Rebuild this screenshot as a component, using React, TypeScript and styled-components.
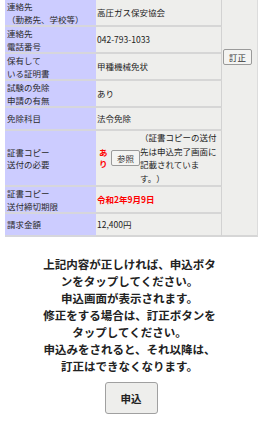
import styled, { createGlobalStyle } from 'styled-components'

const GlobalStyle = createGlobalStyle`
  html, body {
    margin: 0;
    padding: 0;
    background: #ffffff;
  }

  body {
    font-family: "Noto Sans CJK JP", "Noto Sans", sans-serif;
    color: #222222;
  }
`

const Page = styled.div`
  width: 259px;
  display: flex;
  flex-direction: column;
  align-items: center;
`

const Table = styled.table`
  width: 253px;
  margin: 0 1px 0 5px;
  table-layout: fixed;
  border-spacing: 0;
  border-collapse: separate;
  font-size: 8.5px;
  line-height: 12.5px;
  align-self: flex-start;
`

const Label = styled.th<{ $h?: number }>`
  width: 89px;
  height: ${({ $h }) => $h ?? 21}px;
  padding: 0 0 0 2px;
  text-align: left;
  font-weight: normal;
  color: #2a2a2a;
  background: #ccccff;
  border-bottom: 2px solid #d6d6dc;
  vertical-align: middle;
`

const Value = styled.td<{ $red?: boolean }>`
  width: 124px;
  padding: 0 0 0 1px;
  color: ${({ $red }) => ($red ? '#ff0000' : '#222222')};
  font-weight: ${({ $red }) => ($red ? 'bold' : 'normal')};
  background: #eeeeec;
  border-bottom: 2px solid #d6d6d6;
  border-right: 1px solid #d2d2d2;
  vertical-align: middle;
`

const Side = styled.td`
  width: 35px;
  padding: 49px 0 0 0;
  background: #eeeeec;
  border-right: 1px solid #dcdcdc;
  border-bottom: 2px solid #d6d6d6;
  vertical-align: top;
`

const SmallButton = styled.button<{ $w: number }>`
  flex: none;
  width: ${({ $w }) => $w}px;
  height: 16px;
  margin: 0 0 0 1px;
  padding: 0;
  font-family: inherit;
  font-size: 8.5px;
  line-height: 14px;
  color: #333333;
  background: #f4f4f2;
  border: 1px solid #9a9a9a;
  border-radius: 2px;
`

const CopyRow = styled.div`
  display: flex;
  align-items: center;
`

const Mark = styled.span`
  flex: none;
  width: 9px;
  margin: 0 2px 0 2px;
  color: #ff0000;
  font-weight: bold;
  line-height: 11px;
`

const Note = styled.span`
  flex: none;
  width: 80px;
  line-height: 13.5px;
  text-spacing-trim: space-all;
`

const Message = styled.p`
  width: 179px;
  margin: 19px 0 0;
  font-size: 11.5px;
  line-height: 17px;
  font-weight: bold;
  text-align: center;
  color: #222222;
`

const Submit = styled.button`
  width: 53px;
  height: 32px;
  margin: 7px 0 0 3px;
  padding: 0;
  font-family: inherit;
  font-size: 10.5px;
  font-weight: bold;
  color: #222222;
  background: #eeeeec;
  border: 1px solid #a0a0a0;
  border-radius: 3px;
`

const rows: { label: [string, string?]; value: string; h?: number }[] = [
  { label: ['連絡先', '（勤務先、学校等）'], value: '高圧ガス保安協会', h: 25 },
  { label: ['連絡先', '電話番号'], value: '042-793-1033', h: 24 },
  { label: ['保有して', 'いる証明書'], value: '甲種機械免状', h: 25 },
  { label: ['試験の免除', '申請の有無'], value: 'あり', h: 25 },
  { label: ['免除科目'], value: '法令免除', h: 21 },
]

export default function App() {
  return (
    <Page>
      <GlobalStyle />

      <Table>
        <tbody>
          {rows.map((row, i) => (
            <tr key={i}>
              <Label $h={row.h}>
                {row.label[0]}
                {row.label[1] && <br />}
                {row.label[1]}
              </Label>
              <Value>{row.value}</Value>
              {i === 0 && (
                <Side rowSpan={8}>
                  <SmallButton $w={29}>訂正</SmallButton>
                </Side>
              )}
            </tr>
          ))}

          <tr>
            <Label $h={51}>
              証書コピー
              <br />
              送付の必要
            </Label>
            <Value>
              <CopyRow>
                <Mark>あり</Mark>
                <SmallButton $w={29}>参照</SmallButton>
                <Note>（証書コピーの送付先は申込完了画面に記載されています。）</Note>
              </CopyRow>
            </Value>
          </tr>

          <tr>
            <Label $h={25}>
              証書コピー
              <br />
              送付締切期限
            </Label>
            <Value $red>令和2年9月9日</Value>
          </tr>

          <tr>
            <Label $h={21}>請求金額</Label>
            <Value>12,400円</Value>
          </tr>
        </tbody>
      </Table>

      <Message>
        上記内容が正しければ、申込ボタンをタップしてください。
        <br />
        申込画面が表示されます。
        <br />
        修正をする場合は、訂正ボタンをタップしてください。
        <br />
        申込みをされると、それ以降は、訂正はできなくなります。
      </Message>

      <Submit>申込</Submit>
    </Page>
  )
}
